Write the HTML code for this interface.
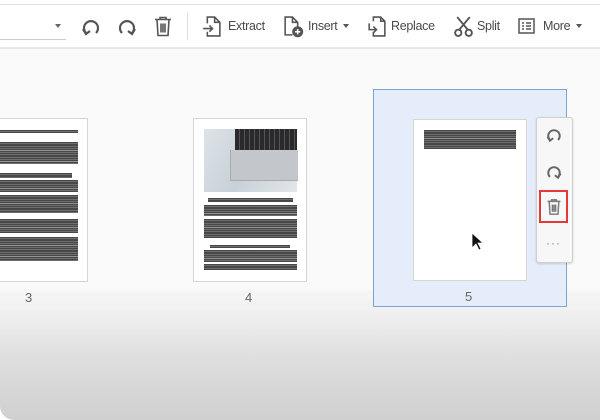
<!DOCTYPE html>
<html><head><style>
body{margin:0;width:600px;height:420px;overflow:hidden;font-family:"Liberation Sans",sans-serif;background:#fff;position:relative}
.a{position:absolute}
.tb{color:#4a4a4a;font-size:12.5px;letter-spacing:-0.3px}
.txt{background:repeating-linear-gradient(#333 0 1.6px,#888 1.6px 2.2px);opacity:.9}
.pg{background:#fff;border:1px solid #d6d6d6}
svg{position:absolute}
</style></head><body>
<div class="a" style="left:0;top:4px;width:600px;height:1px;background:#e2e2e2"></div>
<div class="a" style="left:0;top:47px;width:600px;height:2px;background:#e6e6e6"></div>
<div class="a" style="left:0;top:39px;width:66px;height:1px;background:#ccc"></div>
<div class="a" style="left:55px;top:24px;border:3px solid transparent;border-top:4px solid #666"></div>
<svg style="left:80px;top:16px" width="22" height="22" viewBox="0 0 22 22" fill="none" stroke="#555" stroke-width="2.2"><path d="M6 17A7 7 0 1 1 16 17"/><path d="M3 13l3 5 4-3"/></svg>
<svg style="left:116px;top:16px" width="22" height="22" viewBox="0 0 22 22" fill="none" stroke="#555" stroke-width="2.2"><path d="M16 17A7 7 0 1 0 6 17"/><path d="M19 13l-3 5-4-3"/></svg>
<svg style="left:153px;top:15px" width="20" height="23" viewBox="0 0 20 22" fill="none" stroke="#555" stroke-width="1.6"><path d="M2 4h16M7 4V2h6v2M4 4l1 16h10l1-16M8 8v9M10 8v9M12 8v9"/></svg>
<div class="a" style="left:187px;top:13px;width:1px;height:27px;background:#ddd"></div>
<svg style="left:201px;top:15px" width="21" height="23" viewBox="0 0 20 22" fill="none" stroke="#555" stroke-width="1.5"><path d="M6 8V2h7l5 5v13H6v-4M13 2v5h5"/><path d="M2 13h9M8 10l3 3-3 3"/></svg>
<div class="a tb" style="left:228px;top:19px">Extract</div>
<svg style="left:283px;top:15px" width="21" height="23" viewBox="0 0 20 22" fill="none" stroke="#555" stroke-width="1.5"><path d="M9 19H2V2h7l5 5v4M9 2v5h5"/><circle cx="14" cy="16" r="4.5" fill="#555"/><path d="M14 13.5v5M11.5 16h5" stroke="#fff"/></svg>
<div class="a tb" style="left:308px;top:19px">Insert</div>
<div class="a" style="left:343px;top:24px;border:3px solid transparent;border-top:4px solid #555"></div>
<svg style="left:366px;top:15px" width="21" height="23" viewBox="0 0 20 22" fill="none" stroke="#555" stroke-width="1.5"><path d="M7 6V2h7l4 4v14H7v-4M14 2v4h4"/><path d="M3 8v6h7M7 11l3 3-3 3"/></svg>
<div class="a tb" style="left:391px;top:19px">Replace</div>
<svg style="left:454px;top:16px" width="19" height="21" viewBox="0 0 18 20" fill="none" stroke="#555" stroke-width="1.8"><path d="M3 1l10 12M15 1L5 13"/><circle cx="4" cy="16" r="3"/><circle cx="14" cy="16" r="3"/></svg>
<div class="a tb" style="left:477px;top:19px">Split</div>
<svg style="left:518px;top:18px" width="17" height="16" viewBox="0 0 17 16" fill="none" stroke="#555" stroke-width="1.5"><rect x="1" y="1" width="15" height="14"/><path d="M4 5h2M8 5h5M4 8h2M8 8h5M4 11h2M8 11h5"/></svg>
<div class="a tb" style="left:543px;top:19px">More</div>
<div class="a" style="left:576px;top:24px;border:3px solid transparent;border-top:4px solid #555"></div>

<div class="a" style="left:0;top:49px;width:600px;height:243px;background:#fafafa"></div>
<div class="a" style="left:0;top:290px;width:600px;height:130px;border-bottom-left-radius:14px;background:linear-gradient(#f6f6f6 0,#f1f1f1 20px,#e9e9e9 40px,#dedede 70px,#d6d6d6 100px,#d0d0d0 130px)"></div>

<div class="a pg" style="left:-20px;top:118px;width:106px;height:162px"></div>
<div class="a txt" style="left:0;top:130px;width:78px;height:3px"></div>
<div class="a txt" style="left:0;top:142px;width:78px;height:22px"></div>
<div class="a txt" style="left:0;top:173px;width:72px;height:5px"></div>
<div class="a txt" style="left:0;top:180px;width:78px;height:12px"></div>
<div class="a txt" style="left:0;top:195px;width:78px;height:18px"></div>
<div class="a txt" style="left:0;top:219px;width:78px;height:14px"></div>
<div class="a txt" style="left:0;top:237px;width:78px;height:24px"></div>
<div class="a" style="left:25px;top:290px;color:#666;font-size:13px">3</div>

<div class="a pg" style="left:193px;top:118px;width:112px;height:162px"></div>
<div class="a" style="left:204px;top:129px;width:93px;height:63px;background:linear-gradient(120deg,#dde3e8,#c8d0d8 50%,#e2e6ea)"></div>
<div class="a" style="left:235px;top:129px;width:62px;height:22px;background:repeating-linear-gradient(90deg,#2a2a2c 0 4px,#555 4px 5px)"></div>
<div class="a" style="left:230px;top:150px;width:67px;height:30px;background:#c3c7cc;border-left:1px solid #aaa;border-bottom:1px solid #aaa"></div>
<div class="a txt" style="left:208px;top:198px;width:85px;height:4px"></div>
<div class="a txt" style="left:204px;top:205px;width:93px;height:11px"></div>
<div class="a txt" style="left:204px;top:219px;width:93px;height:19px"></div>
<div class="a txt" style="left:210px;top:245px;width:80px;height:3px"></div>
<div class="a txt" style="left:204px;top:250px;width:93px;height:12px"></div>
<div class="a txt" style="left:204px;top:264px;width:93px;height:6px"></div>
<div class="a" style="left:245px;top:290px;color:#666;font-size:13px">4</div>

<div class="a" style="left:373px;top:89px;width:192px;height:216px;background:#e4edf9;border:1px solid #7aa4d6"></div>
<div class="a pg" style="left:413px;top:119px;width:112px;height:160px"></div>
<div class="a txt" style="left:424px;top:130px;width:92px;height:19px"></div>
<svg style="left:471px;top:232px" width="14" height="20" viewBox="0 0 14 20"><path d="M1 1v15l4-4 3 6 2-1-3-6h5z" fill="#111" stroke="#fff" stroke-width=".8"/></svg>
<div class="a" style="left:465px;top:289px;color:#666;font-size:13px">5</div>

<div class="a" style="left:536px;top:117px;width:35px;height:144px;background:#f7f7f7;border:1px solid #cfcfcf;border-radius:3px;box-shadow:0 1px 2px rgba(0,0,0,.15)"></div>
<svg style="left:545px;top:126px" width="18" height="18" viewBox="0 0 22 22" fill="none" stroke="#666" stroke-width="2.4"><path d="M6 17A7 7 0 1 1 16 17"/><path d="M3 13l3 5 4-3"/></svg>
<svg style="left:545px;top:163px" width="18" height="18" viewBox="0 0 22 22" fill="none" stroke="#666" stroke-width="2.4"><path d="M16 17A7 7 0 1 0 6 17"/><path d="M19 13l-3 5-4-3"/></svg>
<div class="a" style="left:539px;top:190px;width:29px;height:33px;border:2px solid #e53935;box-sizing:border-box"></div>
<svg style="left:546px;top:198px" width="16" height="18" viewBox="0 0 20 22" fill="none" stroke="#777" stroke-width="1.8"><path d="M2 4h16M7 4V2h6v2M4 4l1 16h10l1-16M8 8v9M10 8v9M12 8v9"/></svg>
<div class="a" style="left:546px;top:236px;color:#888;font-size:12px;letter-spacing:1px">···</div>
</body></html>
